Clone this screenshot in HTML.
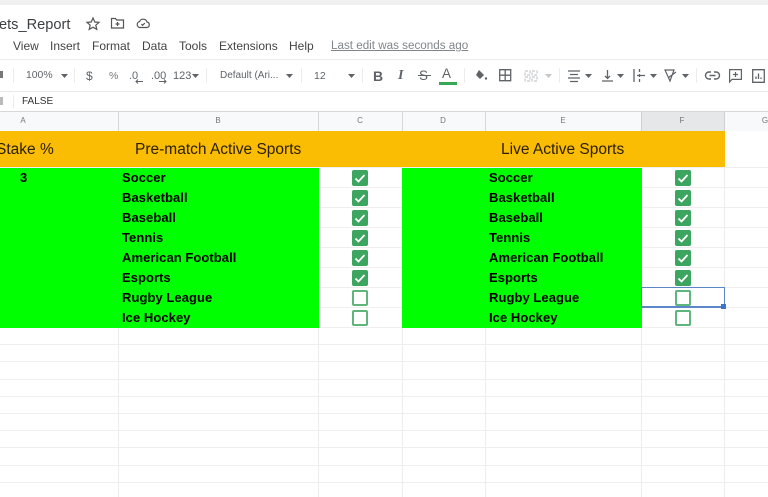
<!DOCTYPE html>
<html><head><meta charset="utf-8"><style>
html,body{margin:0;padding:0;background:#fff}
#p{position:relative;width:768px;height:497px;overflow:hidden;background:#fff;font-family:"Liberation Sans",sans-serif;color:#444;filter:blur(.35px)}
#p div{position:absolute}
.t{white-space:nowrap;line-height:14px}
.m{top:39px;font-size:12px;color:#444}
.tb{top:69px;font-size:10.4px;color:#5f6368}
.hl{top:116px;font-size:8px;color:#777;width:20px;text-align:center;line-height:10px}
.b{font-weight:bold;font-size:13px;color:#000;letter-spacing:.06px;line-height:16px;white-space:nowrap}
.hd{font-size:15.5px;color:#2b2000;top:141px;line-height:18px;white-space:nowrap}
.r{left:0;width:768px;height:1px;background:#efefef}
.v{width:1px;background:#ececec}
.c{width:16px;height:16px;background:#3ca55f;border-radius:2px}
.u{width:12px;height:12px;border:2px solid #5fb57c;border-radius:2px;background:#fff}
svg{position:absolute;overflow:visible}
</style></head><body><div id="p">
<div style="left:0;top:0;width:768px;height:5px;background:#f1f1f1"></div>

<div class="t" style="left:-1px;top:15.500px;font-size:14.600px;line-height:18px;color:#3c4043;white-space:nowrap">ets_Report</div>
<svg style="left:85px;top:16px" width="16" height="16" viewBox="0 0 16 16" fill="none" stroke="#555" stroke-width="1.200"><path d="M8 2l1.800 4 4.200.4-3.200 2.800 1 4.200L8 11.200 4.200 13.400l1-4.200L2 6.400l4.200-.4z"/></svg>
<svg style="left:110px;top:16px" width="15" height="14" viewBox="0 0 15 14" fill="none" stroke="#555" stroke-width="1.200"><path d="M1.500 2.500h4l1.200 1.500h6.800v8h-12z"/><path d="M7.500 6v4M5.500 8h4"/></svg>
<svg style="left:136px;top:17px" width="14" height="12" viewBox="0 0 14 12" fill="none" stroke="#555" stroke-width="1.200"><path d="M4 10.500a3 3 0 0 1-.5-5.900A4 4 0 0 1 11 5a2.800 2.800 0 0 1 0 5.500z"/><path d="M5.300 7l1.300 1.300 2.300-2.300"/></svg>

<div class="t m" style="left:13px">View</div>
<div class="t m" style="left:50px">Insert</div>
<div class="t m" style="left:92px">Format</div>
<div class="t m" style="left:142px">Data</div>
<div class="t m" style="left:179px">Tools</div>
<div class="t m" style="left:219px">Extensions</div>
<div class="t m" style="left:289px">Help</div>
<div class="t m" style="left:331px;font-size:11.650px;color:#80868b;text-decoration:underline">Last edit was seconds ago</div>

<div style="left:0;top:59px;width:768px;height:1px;background:#ececec"></div>
<div style="left:0;top:91px;width:768px;height:1px;background:#e8e8e8"></div>

<div style="left:0;top:71px;width:3px;height:7px;background:#777"></div>
<div class="t tb" style="left:26px">100%</div>
<svg style="left:61px;top:74px" width="7" height="4"><path d="M0 0h7L3.500 4z" fill="#5f6368"/></svg>
<div class="t tb" style="left:86px;font-size:12px">$</div>
<div class="t tb" style="left:109px;font-size:10.500px;color:#777">%</div>
<div class="t tb" style="left:129px;font-size:11px">.0</div>
<svg style="left:135px;top:79px" width="8" height="5" fill="none" stroke="#5f6368"><path d="M8 2.500H1M3 .5l-2 2 2 2"/></svg>
<div class="t tb" style="left:151px;font-size:11px">.00</div>
<svg style="left:159px;top:79px" width="8" height="5" fill="none" stroke="#5f6368"><path d="M0 2.500h7M5 .5l2 2-2 2"/></svg>
<div class="t tb" style="left:173px;font-size:11px">123</div>
<svg style="left:192px;top:74px" width="7" height="4"><path d="M0 0h7L3.500 4z" fill="#5f6368"/></svg>
<div class="t tb" style="left:220px;font-size:10px">Default (Ari...</div>
<svg style="left:286px;top:74px" width="7" height="4"><path d="M0 0h7L3.500 4z" fill="#5f6368"/></svg>
<div class="t tb" style="left:314px;font-size:10.500px">12</div>
<svg style="left:348px;top:74px" width="7" height="4"><path d="M0 0h7L3.500 4z" fill="#5f6368"/></svg>
<div class="v" style="left:13px;top:68px;height:15px"></div>
<div class="v" style="left:74px;top:68px;height:15px"></div>
<div class="v" style="left:206px;top:68px;height:15px"></div>
<div class="v" style="left:301px;top:68px;height:15px"></div>
<div class="v" style="left:362px;top:68px;height:15px"></div>
<div class="v" style="left:464px;top:68px;height:15px"></div>
<div class="v" style="left:559px;top:68px;height:15px"></div>
<div class="v" style="left:696px;top:68px;height:15px"></div>

<div class="t" style="left:373px;top:69px;font-size:14px;font-weight:bold;color:#5f6368">B</div>
<div class="t" style="left:398px;top:69px;font:italic bold 14px/14px 'Liberation Serif',serif;color:#5f6368">I</div>
<div class="t" style="left:419px;top:69px;font-size:13.500px;color:#5f6368">S</div>
<div style="left:418px;top:75px;width:13px;height:1px;background:#5f6368"></div>
<div class="t" style="left:442px;top:67px;font-size:13.500px;color:#5f6368">A</div>
<div style="left:439px;top:82px;width:18px;height:3px;background:#34a853"></div>
<svg style="left:474px;top:69px" width="14" height="13" viewBox="0 0 14 13"><path d="M5 1l5 5-4 4-4-4z" fill="#5f6368"/><circle cx="12" cy="9.500" r="1.200" fill="#5f6368"/></svg>
<svg style="left:499px;top:69px" width="13" height="13" fill="none" stroke="#5f6368" stroke-width="1.300"><path d="M.7.700h11v11H.7zM6.200.700v11M.7 6.200h11"/></svg>
<svg style="left:524px;top:70px" width="14" height="12" fill="none" stroke="#c4c7ca" stroke-width="1.200" stroke-dasharray="3 1.500"><path d="M1 1h5v4H1zM8 1h5v4H8zM1 7h5v4H1zM8 7h5v4H8z"/></svg>
<svg style="left:545px;top:74px" width="7" height="4"><path d="M0 0h7L3.500 4z" fill="#c4c7ca"/></svg>
<svg style="left:568px;top:70px" width="12" height="12" stroke="#5f6368" stroke-width="1.300"><path d="M0 1h12M2 4.500h8M0 8h12M2 11.500h8"/></svg>
<svg style="left:585px;top:74px" width="7" height="4"><path d="M0 0h7L3.500 4z" fill="#5f6368"/></svg>
<svg style="left:602px;top:69px" width="11" height="13" fill="none" stroke="#5f6368" stroke-width="1.300"><path d="M0 12h11M5.500 1v8M3 7l2.500 2.500L8 7"/></svg>
<svg style="left:617px;top:74px" width="7" height="4"><path d="M0 0h7L3.500 4z" fill="#5f6368"/></svg>
<svg style="left:633px;top:69px" width="13" height="13" fill="none" stroke="#5f6368" stroke-width="1.300"><path d="M1 0v13M6.500 0v3M6.500 5v3M6.500 10v3M4 6.500h8"/></svg>
<svg style="left:650px;top:74px" width="7" height="4"><path d="M0 0h7L3.500 4z" fill="#5f6368"/></svg>
<svg style="left:665px;top:69px" width="14" height="13" fill="none" stroke="#5f6368" stroke-width="1.200"><path d="M0 1h9L5 12zM3 9l8-6"/></svg>
<svg style="left:682px;top:74px" width="7" height="4"><path d="M0 0h7L3.500 4z" fill="#5f6368"/></svg>
<svg style="left:705px;top:71px" width="15" height="9" fill="none" stroke="#5f6368" stroke-width="1.400"><path d="M6 1H4a3.500 3.500 0 0 0 0 7h2M9 1h2a3.500 3.500 0 0 1 0 7H9M4.500 4.500h6"/></svg>
<svg style="left:729px;top:69px" width="13" height="14" fill="none" stroke="#5f6368" stroke-width="1.200"><path d="M.6.600h11.800v9.800H3L.6 13zM6.500 3v5M4 5.500h5"/></svg>
<svg style="left:752px;top:69px" width="13" height="14" fill="none" stroke="#5f6368" stroke-width="1.300"><path d="M.7.700h11.600v12.600H.7zM4 10V7.500M6.500 10V4.500M9 10V8.500"/></svg>

<div style="left:0;top:97px;width:3px;height:8px;background:#bbb"></div>
<div class="v" style="left:13px;top:95px;height:13px"></div>
<div class="t" style="left:22px;top:95px;font-size:10px;color:#333">FALSE</div>

<div style="left:0;top:111px;width:768px;height:1px;background:#d8d8d8"></div>
<div style="left:0;top:112px;width:768px;height:19px;background:#f8f9fa"></div>
<div style="left:641px;top:112px;width:83px;height:19px;background:#e6e7e8"></div>
<div class="v" style="left:118px;top:112px;height:19px;background:#d8d8d8"></div>
<div class="v" style="left:318px;top:112px;height:19px;background:#d8d8d8"></div>
<div class="v" style="left:402px;top:112px;height:19px;background:#d8d8d8"></div>
<div class="v" style="left:485px;top:112px;height:19px;background:#d8d8d8"></div>
<div class="v" style="left:641px;top:112px;height:19px;background:#d0d0d0"></div>
<div class="v" style="left:724px;top:112px;height:19px;background:#d0d0d0"></div>
<div class="hl" style="left:13px">A</div>
<div class="hl" style="left:208px">B</div>
<div class="hl" style="left:350px">C</div>
<div class="hl" style="left:433px">D</div>
<div class="hl" style="left:553px">E</div>
<div class="hl" style="left:672px">F</div>
<div class="hl" style="left:755px">G</div>

<div class="r" style="top:167px"></div><div class="r" style="top:187px"></div><div class="r" style="top:207px"></div><div class="r" style="top:227px"></div><div class="r" style="top:247px"></div><div class="r" style="top:267px"></div><div class="r" style="top:287px"></div><div class="r" style="top:307px"></div><div class="r" style="top:327px"></div><div class="r" style="top:344px"></div><div class="r" style="top:361px"></div><div class="r" style="top:379px"></div><div class="r" style="top:396px"></div><div class="r" style="top:413px"></div><div class="r" style="top:430px"></div><div class="r" style="top:447px"></div><div class="r" style="top:465px"></div><div class="r" style="top:482px"></div>
<div class="v" style="left:118px;top:327px;height:170px"></div>
<div class="v" style="left:318px;top:131px;height:366px"></div>
<div class="v" style="left:402px;top:131px;height:366px"></div>
<div class="v" style="left:485px;top:327px;height:170px"></div>
<div class="v" style="left:641px;top:131px;height:366px"></div>
<div class="v" style="left:724px;top:131px;height:366px"></div>

<div style="left:0;top:131px;width:724.500px;height:36px;background:#fbbc04"></div>
<div style="left:0;top:168px;width:318.500px;height:159.500px;background:#00ff00"></div>
<div style="left:402px;top:168px;width:239.500px;height:159.500px;background:#00ff00"></div>

<div class="hd" style="left:-4px">Stake %</div>
<div class="hd" style="left:135px">Pre-match Active Sports</div>
<div class="hd" style="left:501px">Live Active Sports</div>
<div class="b" style="left:20px;top:170px">3</div>

<div class="b" style="left:122px;top:170px">Soccer</div>
<div class="b" style="left:122px;top:190px">Basketball</div>
<div class="b" style="left:122px;top:210px">Baseball</div>
<div class="b" style="left:122px;top:230px">Tennis</div>
<div class="b" style="left:122px;top:250px">American Football</div>
<div class="b" style="left:122px;top:270px">Esports</div>
<div class="b" style="left:122px;top:290px">Rugby League</div>
<div class="b" style="left:122px;top:310px">Ice Hockey</div>
<div class="b" style="left:489px;top:170px">Soccer</div>
<div class="b" style="left:489px;top:190px">Basketball</div>
<div class="b" style="left:489px;top:210px">Baseball</div>
<div class="b" style="left:489px;top:230px">Tennis</div>
<div class="b" style="left:489px;top:250px">American Football</div>
<div class="b" style="left:489px;top:270px">Esports</div>
<div class="b" style="left:489px;top:290px">Rugby League</div>
<div class="b" style="left:489px;top:310px">Ice Hockey</div>

<div class="c" style="left:352px;top:170px"><svg width="16" height="16" fill="none" stroke="#fff" stroke-width="1.800"><path d="M3.500 8.500l3 3 6-6.500"/></svg></div>
<div class="c" style="left:352px;top:190px"><svg width="16" height="16" fill="none" stroke="#fff" stroke-width="1.800"><path d="M3.500 8.500l3 3 6-6.500"/></svg></div>
<div class="c" style="left:352px;top:210px"><svg width="16" height="16" fill="none" stroke="#fff" stroke-width="1.800"><path d="M3.500 8.500l3 3 6-6.500"/></svg></div>
<div class="c" style="left:352px;top:230px"><svg width="16" height="16" fill="none" stroke="#fff" stroke-width="1.800"><path d="M3.500 8.500l3 3 6-6.500"/></svg></div>
<div class="c" style="left:352px;top:250px"><svg width="16" height="16" fill="none" stroke="#fff" stroke-width="1.800"><path d="M3.500 8.500l3 3 6-6.500"/></svg></div>
<div class="c" style="left:352px;top:270px"><svg width="16" height="16" fill="none" stroke="#fff" stroke-width="1.800"><path d="M3.500 8.500l3 3 6-6.500"/></svg></div>
<div class="u" style="left:352px;top:290px"></div>
<div class="u" style="left:352px;top:310px"></div>
<div class="c" style="left:675px;top:170px"><svg width="16" height="16" fill="none" stroke="#fff" stroke-width="1.800"><path d="M3.500 8.500l3 3 6-6.500"/></svg></div>
<div class="c" style="left:675px;top:190px"><svg width="16" height="16" fill="none" stroke="#fff" stroke-width="1.800"><path d="M3.500 8.500l3 3 6-6.500"/></svg></div>
<div class="c" style="left:675px;top:210px"><svg width="16" height="16" fill="none" stroke="#fff" stroke-width="1.800"><path d="M3.500 8.500l3 3 6-6.500"/></svg></div>
<div class="c" style="left:675px;top:230px"><svg width="16" height="16" fill="none" stroke="#fff" stroke-width="1.800"><path d="M3.500 8.500l3 3 6-6.500"/></svg></div>
<div class="c" style="left:675px;top:250px"><svg width="16" height="16" fill="none" stroke="#fff" stroke-width="1.800"><path d="M3.500 8.500l3 3 6-6.500"/></svg></div>
<div class="c" style="left:675px;top:270px"><svg width="16" height="16" fill="none" stroke="#fff" stroke-width="1.800"><path d="M3.500 8.500l3 3 6-6.500"/></svg></div>
<div class="u" style="left:675px;top:290px"></div>
<div class="u" style="left:675px;top:310px"></div>

<div style="left:641px;top:287px;width:82px;height:18px;border:1px solid #5b87c9;border-bottom-width:2px"></div>
<div style="left:721px;top:304px;width:5px;height:5px;background:#3f73cc"></div>
</div></body></html>
